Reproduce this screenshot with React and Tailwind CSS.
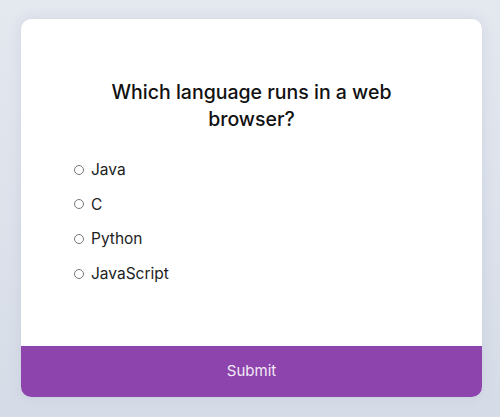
import React from "react";

const options = ["Java", "C", "Python", "JavaScript"];

export default function App() {
  return (
    <div
      className="w-[500px] h-[417px] bg-gradient-to-b from-[#e4e8ef] to-[#d6dce7] pt-[19px] pl-[21px]"
      style={{ fontFamily: "Inter, 'Noto Sans', sans-serif" }}
    >
      <div className="w-[461px] h-[378px] bg-white rounded-[10px] overflow-hidden flex flex-col shadow-[0_0_12px_rgba(150,165,190,0.25)]">
        <div className="flex-1 flex flex-col pt-[60px]">
          <h1 className="mx-auto w-[300px] text-center text-[19.5px] leading-[27px] font-medium text-[#111]">
            Which language runs in a web browser?
          </h1>
          <div className="flex flex-col gap-[11.7px] pl-[53px] pt-[25px]">
            {options.map((o) => (
              <label key={o} className="flex items-center gap-[7px] h-[23px] text-[15.5px] text-[#222]">
                <span className="w-[10px] h-[10px] rounded-full border border-[#777] bg-white" />
                {o}
              </label>
            ))}
          </div>
        </div>
        <button className="h-[51px] w-full bg-[#8e44ad] text-[#f3eaf7] text-[15px]">
          Submit
        </button>
      </div>
    </div>
  );
}
